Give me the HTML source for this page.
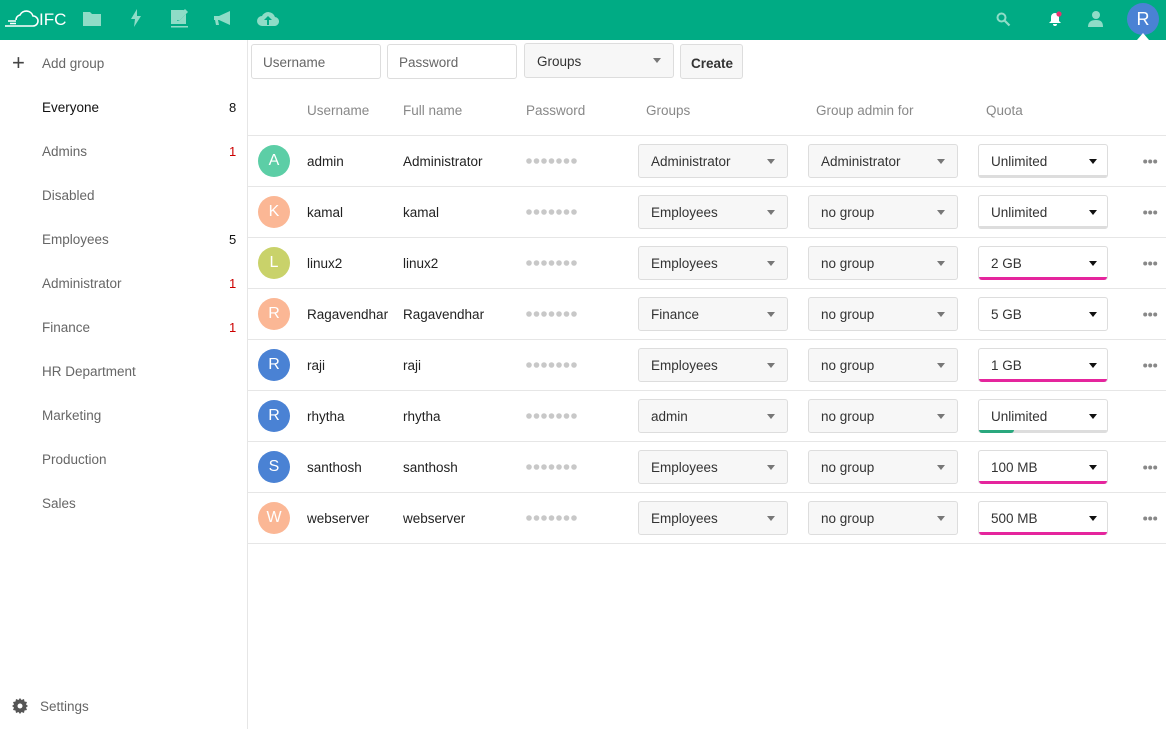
<!DOCTYPE html>
<html><head><meta charset="utf-8">
<style>
*{box-sizing:border-box;margin:0;padding:0}
body{width:1166px;height:729px;overflow:hidden;background:#fff;font-family:"Liberation Sans",sans-serif;font-size:14px;color:#222;position:relative}
.a{position:absolute}
#top{left:0;top:0;width:1166px;height:40px;background:#00ab84}
#side{left:0;top:40px;width:248px;height:689px;border-right:1px solid #e6e6e6}
.si{position:absolute;left:42px;color:#666;font-size:13.5px}
.cnt{position:absolute;left:229px;color:#c00;font-size:13px}
.inp{position:absolute;height:35px;border:1px solid #ddd;border-radius:3px;background:#fff;color:#666;padding:0 11px;line-height:35px;font-size:13.5px}
.sel{position:absolute;width:150px;height:34px;border:1px solid #ddd;border-radius:3px;background:#f7f7f7;padding-left:12px;line-height:33px;color:#333;font-size:13.5px}
.sel:after{content:"";position:absolute;right:12px;top:14px;border:4px solid transparent;border-top:5px solid #777;border-bottom:0}
.q{position:absolute;width:130px;height:34px;border:1px solid #ddd;border-radius:3px;background:#fff;padding-left:12px;line-height:33px;color:#333;font-size:13.5px}
.q:after{content:"";position:absolute;right:10px;top:14px;border:4px solid transparent;border-top:5px solid #111;border-bottom:0}
.bar{position:absolute;left:0;bottom:-1px;height:3px;width:100%;border-radius:0 0 3px 3px}
.hd{position:absolute;top:103px;color:#888;font-size:13.5px}
.line{position:absolute;left:248px;width:918px;height:1px;background:#e6e6e6}
.av{position:absolute;left:258px;width:32px;height:32px;border-radius:50%;color:#fff;text-align:center;line-height:32px;font-size:16px}
.tx{position:absolute;font-size:13.5px;color:#222}
</style></head><body>
<div id="top" class="a">
<svg class="a" style="left:3px;top:8px" width="64" height="22" viewBox="0 0 64 22"><path d="M6 18H30a5 5 0 0 0 0-10a7 7 0 0 0-13-1a5 5 0 0 0-4 5M2 18h4M5 13h8M7 15.5h6" fill="none" stroke="#fff" stroke-width="1.6"/><text x="36" y="17" fill="#fff" font-family="Liberation Sans" font-size="17">IFC</text></svg>
<svg class="a" style="left:83px;top:10px" width="18" height="16"><path d="M0 2h7l2 2h9v12H0z" fill="#8fdcc7"/></svg>
<svg class="a" style="left:130px;top:9px" width="12" height="18"><path d="M7 0L1 10h4l-1 8 7-11H7z" fill="#8fdcc7"/></svg>
<svg class="a" style="left:171px;top:9px" width="19" height="19"><path d="M0 1h13L7 9l-1 3 3-1 6-6v10H0z" fill="#8fdcc7"/><path d="M14 0l3 3-8 8H6V8z" fill="#8fdcc7"/><rect y="17" width="17" height="1.5" fill="#8fdcc7"/></svg>
<svg class="a" style="left:214px;top:11px" width="20" height="15"><path d="M0 5h5l11-5v14L5 9H4l1 5H2l-1-5H0z" fill="#8fdcc7"/></svg>
<svg class="a" style="left:257px;top:10px" width="22" height="16"><path d="M5 16a5 5 0 0 1 0-10a7 7 0 0 1 13 1a4.5 4.5 0 0 1-1 9z" fill="#8fdcc7"/><path d="M11 6l-4 4h3v5h2v-5h3z" fill="#00ab84"/></svg>
<svg class="a" style="left:996px;top:12px" width="15" height="15"><circle cx="5.5" cy="5.5" r="4" fill="none" stroke="#8fdcc7" stroke-width="2"/><path d="M8.5 8.5l5 5" stroke="#8fdcc7" stroke-width="2.2"/></svg>
<svg class="a" style="left:1048px;top:10px" width="16" height="17"><path d="M7 3a4 4 0 0 0-4 4v4l-2 2h12l-2-2V7a4 4 0 0 0-4-4zM5 14h4a2 2 0 0 1-4 0z" fill="#fff"/><circle cx="11" cy="4" r="2.6" fill="#e8336f"/></svg>
<svg class="a" style="left:1087px;top:10px" width="16" height="17"><circle cx="9" cy="5" r="4" fill="#8fdcc7"/><path d="M1 17c0-5 3-7 8-7s7 2 7 7z" fill="#8fdcc7"/></svg>
<div class="a" style="left:1127px;top:3px;width:32px;height:32px;border-radius:50%;background:#4a82d4;color:#fff;text-align:center;line-height:32px;font-size:18px">R</div>
<div class="a" style="left:1137px;top:33px;border:6px solid transparent;border-bottom:7px solid #fff;border-top:0"></div>
</div>

<div id="side" class="a">
<div class="a" style="left:12px;top:15px;font-size:22px;color:#444;line-height:16px">+</div>
<div class="si" style="top:16px">Add group</div>
<div class="si" style="top:60px;color:#111">Everyone</div><div class="cnt" style="top:60px;color:#111">8</div>
<div class="si" style="top:104px">Admins</div><div class="cnt" style="top:104px">1</div>
<div class="si" style="top:148px">Disabled</div>
<div class="si" style="top:192px">Employees</div><div class="cnt" style="top:192px;color:#111">5</div>
<div class="si" style="top:236px">Administrator</div><div class="cnt" style="top:236px">1</div>
<div class="si" style="top:280px">Finance</div><div class="cnt" style="top:280px">1</div>
<div class="si" style="top:324px">HR Department</div>
<div class="si" style="top:368px">Marketing</div>
<div class="si" style="top:412px">Production</div>
<div class="si" style="top:456px">Sales</div>
<svg class="a" style="left:12px;top:658px" width="16" height="16" viewBox="0 0 16 16"><path d="M8 0l1.5 2 2.5-1 .5 2.5 2.5.5-1 2.5 2 1.5-2 1.5 1 2.5-2.5.5-.5 2.5-2.5-1L8 16l-1.5-2-2.5 1-.5-2.5-2.5-.5 1-2.5L0 8l2-1.5L1 4l2.5-.5L4 1l2.5 1z" fill="#555"/><circle cx="8" cy="8" r="2.5" fill="#fff"/></svg>
<div class="si" style="left:40px;top:659px">Settings</div>
</div>

<div class="inp" style="left:251px;top:44px;width:130px">Username</div>
<div class="inp" style="left:387px;top:44px;width:130px">Password</div>
<div class="sel" style="left:524px;top:43px;height:35px;line-height:35px">Groups</div>
<div class="inp" style="left:680px;top:44px;width:63px;background:#f7f7f7;color:#333;font-weight:bold;padding:0 10px;line-height:37px">Create</div>

<div class="hd" style="left:307px">Username</div>
<div class="hd" style="left:403px">Full name</div>
<div class="hd" style="left:526px">Password</div>
<div class="hd" style="left:646px">Groups</div>
<div class="hd" style="left:816px">Group admin for</div>
<div class="hd" style="left:986px">Quota</div>

<div class="line" style="top:135px"></div>
<div id="rows"></div>
<script>
var R=[["A","#5ccea6","admin","Administrator","Administrator","Administrator","Unlimited","#ddd",0,1],
["K","#fbb795","kamal","kamal","Employees","no group","Unlimited","#ddd",0,1],
["L","#c9d26a","linux2","linux2","Employees","no group","2 GB","#e5259d",1,1],
["R","#fbb795","Ragavendhar","Ragavendhar","Finance","no group","5 GB","",0,1],
["R","#4a82d4","raji","raji","Employees","no group","1 GB","#e5259d",1,1],
["R","#4a82d4","rhytha","rhytha","admin","no group","Unlimited","#ddd",2,0],
["S","#4a82d4","santhosh","santhosh","Employees","no group","100 MB","#e5259d",1,1],
["W","#fbb795","webserver","webserver","Employees","no group","500 MB","#e5259d",1,1]];
var pw='';for(var k=0;k<7;k++)pw+='<circle cx="'+(3+k*7.5)+'" cy="3" r="2.8" fill="#c8c8c8"/>';
var h="";
R.forEach(function(r,i){var y=136+i*51;
h+='<div class="av" style="top:'+(y+9)+'px;background:'+r[1]+'">'+r[0]+'</div>';
h+='<div class="tx" style="left:307px;top:'+(y+18)+'px">'+r[2]+'</div>';
h+='<div class="tx" style="left:403px;top:'+(y+18)+'px">'+r[3]+'</div>';
h+='<svg class="a" style="left:526px;top:'+(y+22)+'px" width="54" height="6">'+pw+'</svg>';
h+='<div class="sel" style="left:638px;top:'+(y+8)+'px;line-height:34px">'+r[4]+'</div>';
h+='<div class="sel" style="left:808px;top:'+(y+8)+'px;line-height:34px">'+r[5]+'</div>';
var bar='';
if(r[8]==0&&r[7])bar='<div class="bar" style="background:#ddd"></div>';
if(r[8]==1)bar='<div class="bar" style="background:#e5259d"></div>';
if(r[8]==2)bar='<div class="bar" style="background:#ddd"></div><div class="bar" style="background:#2aa87e;width:35px"></div>';
h+='<div class="q" style="left:978px;top:'+(y+8)+'px;line-height:34px">'+r[6]+bar+'</div>';
if(r[9])h+='<svg class="a" style="left:1143px;top:'+(y+23)+'px" width="15" height="5"><circle cx="2.2" cy="2.5" r="2" fill="#888"/><circle cx="7.2" cy="2.5" r="2" fill="#888"/><circle cx="12.2" cy="2.5" r="2" fill="#888"/></svg>';
h+='<div class="line" style="top:'+(y+50)+'px"></div>';});
document.getElementById("rows").innerHTML=h;
</script>
</body></html>
